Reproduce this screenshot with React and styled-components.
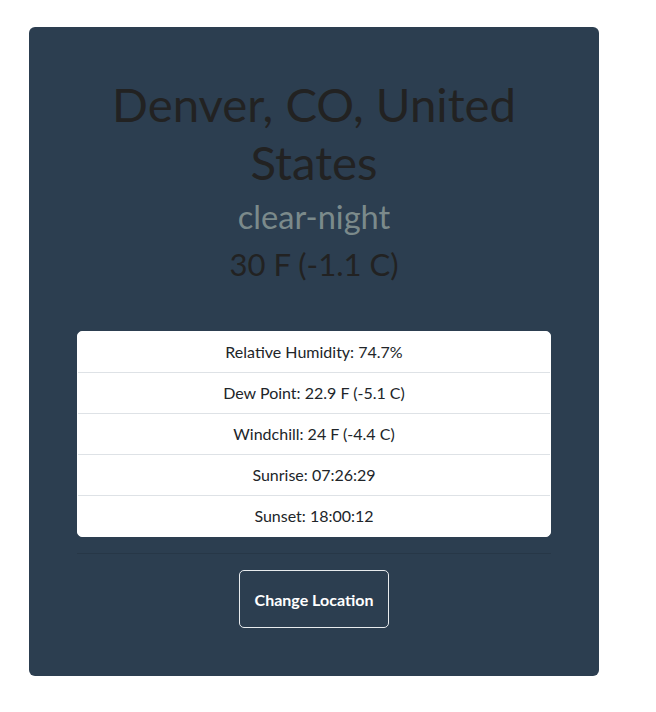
import React from "react";
import styled, { createGlobalStyle } from "styled-components";

const Global = createGlobalStyle`
  html, body { margin: 0; padding: 0; background: #ffffff; }
  body { font-family: Lato, "Open Sans", sans-serif; color: #212529; }
  * { box-sizing: border-box; }
`;

const Page = styled.div`
  padding: 27px 57px 37px 29px;
`;

const Card = styled.div`
  width: 570px;
  background: #2c3e50;
  border-radius: 6px;
  padding: 48px 48px 48px;
  display: flex;
  flex-direction: column;
  align-items: stretch;
  text-align: center;
`;

const Title = styled.h1`
  margin: 0 0 8px;
  font-size: 47.3px;
  line-height: 57.6px;
  font-weight: 400;
  color: #222222;
`;

const Condition = styled.h2`
  margin: 0 0 8px;
  font-size: 32.6px;
  line-height: 38.4px;
  font-weight: 400;
  color: #7b8a8b;
`;

const Temp = styled.h2`
  margin: 0 0 48px;
  font-size: 31.1px;
  line-height: 38.4px;
  font-weight: 400;
  color: #222222;
`;

const List = styled.ul`
  list-style: none;
  margin: 0;
  padding: 0;
  background: #ffffff;
  border: 1px solid #ffffff;
  border-radius: 5px;
  overflow: hidden;
`;

const Item = styled.li`
  padding: 8px 20px;
  font-size: 16px;
  line-height: 24px;
  color: #212529;
  border-top: ${(p) => (p.$first ? "none" : "1px solid #dee2e6")};
`;

const Rule = styled.hr`
  margin: 16px 0;
  border: 0;
  border-top: 1px solid rgba(0, 0, 0, 0.1);
`;

const Button = styled.button`
  align-self: center;
  width: 150px;
  height: 58px;
  background: transparent;
  border: 1px solid #e8ebee;
  border-radius: 5px;
  color: #ffffff;
  font-family: Lato, "Open Sans", sans-serif;
  font-weight: 700;
  font-size: 16px;
  cursor: pointer;
`;

const rows = [
  "Relative Humidity: 74.7%",
  "Dew Point: 22.9 F (-5.1 C)",
  "Windchill: 24 F (-4.4 C)",
  "Sunrise: 07:26:29",
  "Sunset: 18:00:12",
];

export default function App() {
  return (
    <>
      <Global />
      <Page>
        <Card>
          <Title>Denver, CO, United States</Title>
          <Condition>clear-night</Condition>
          <Temp>30 F (-1.1 C)</Temp>
          <List>
            {rows.map((r, i) => (
              <Item key={r} $first={i === 0}>{r}</Item>
            ))}
          </List>
          <Rule />
          <Button>Change Location</Button>
        </Card>
      </Page>
    </>
  );
}
